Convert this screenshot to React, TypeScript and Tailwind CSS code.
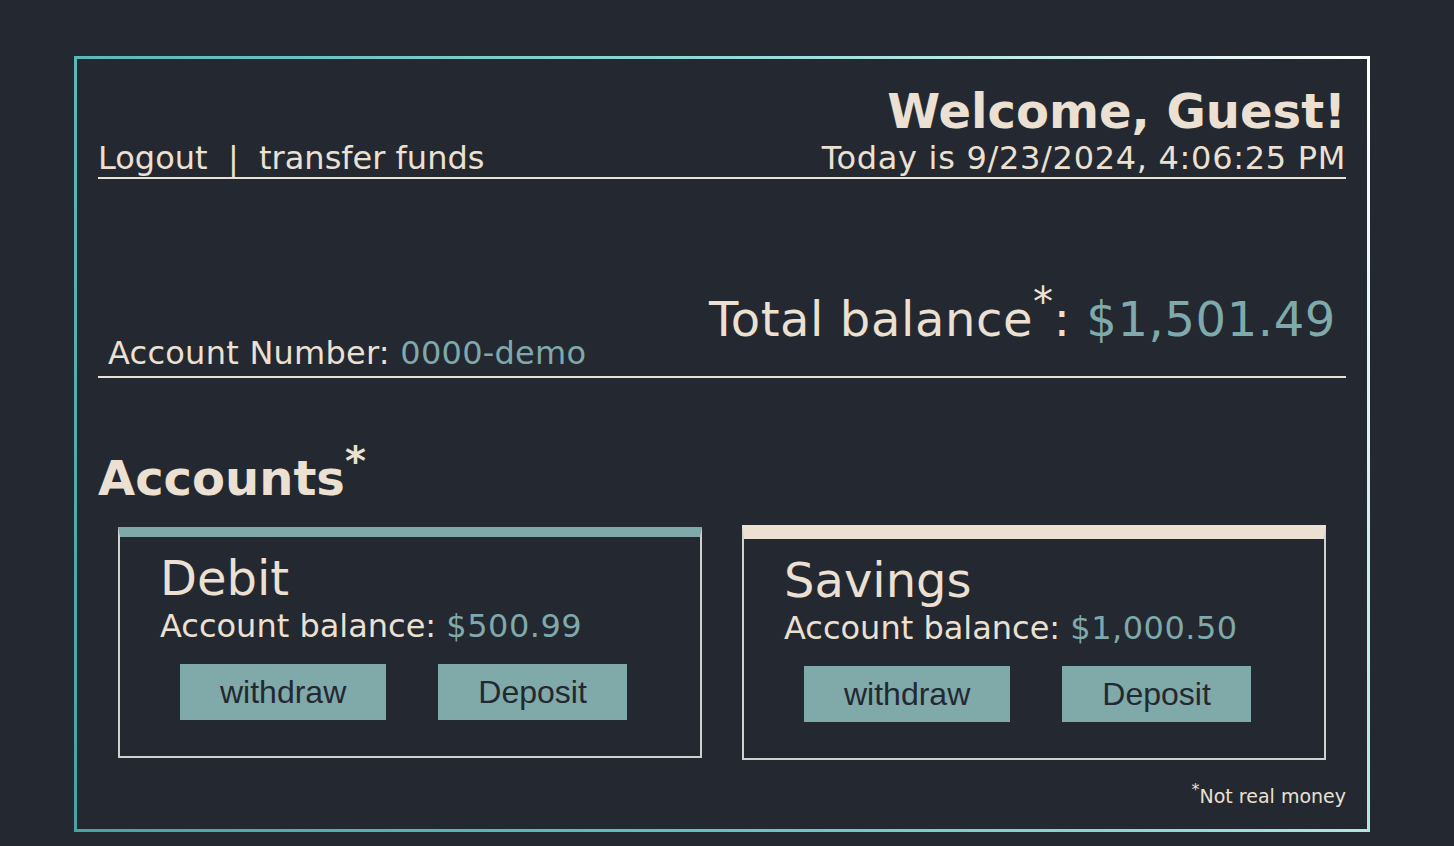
import React from 'react'

const sans = "font-['DejaVu_Sans',Verdana,sans-serif]"

const AccountCard = ({ name, balance, topClass }: { name: string; balance: string; topClass: string }) => (
    <div className={`w-[584px] border-2 border-[#d0d0d0] ${topClass} pl-[40px] pt-[17px] pb-[36px]`}>
        <h3 className="text-[48px] leading-[48px]">{name}</h3>
        <p className="mt-[8px] text-[32px] leading-[32px]">
            Account balance: <span className="text-[#7fa9ab] tracking-[0.5px]">{balance}</span>
        </p>
        <div className="mt-[22px] ml-[20px] flex gap-[52px]">
            <button className="h-[56px] px-[40px] bg-[#80a9aa] text-[#232831] text-[32px] font-['Liberation_Sans',Arial,sans-serif]">
                withdraw
            </button>
            <button className="h-[56px] px-[40px] bg-[#80a9aa] text-[#232831] text-[32px] font-['Liberation_Sans',Arial,sans-serif]">
                Deposit
            </button>
        </div>
    </div>
)

export default function App() {
    const accounts = [
        { name: 'Debit', balance: '$500.99', topClass: 'border-t-[10px] border-t-[#80a9aa]' },
        { name: 'Savings', balance: '$1,000.50', topClass: 'border-t-[14px] border-t-[#ebe0d2]' },
    ]

    return (
        <div className={`min-h-[846px] bg-[#232831] text-[#ebe0d2] ${sans} pt-[56px] pl-[74px]`}>
            <div className="w-[1296px] h-[776px] border-[3px] [border-image:linear-gradient(60deg,#48a3a3_0%,#62c0c0_35%,#95dcd8_65%,#ffffff_100%)_1] px-[21px]">
                {/* header */}
                <div className="flex justify-between items-end border-b-2 border-[#ebe0d2] pt-[28px] pb-[3px]">
                    <div className="text-[32px] leading-[32px] whitespace-pre">
                        <a>Logout</a>{'  |  '}<a>transfer funds</a>
                    </div>
                    <div className="text-right">
                        <h1 className="text-[48px] leading-[48px] font-bold">Welcome, Guest!</h1>
                        <p className="mt-[7px] text-[32px] leading-[32px] tracking-[0.7px]">Today is 9/23/2024, 4:06:25 PM</p>
                    </div>
                </div>

                {/* balance */}
                <div className="border-b-2 border-[#ebe0d2] pt-[116px] pb-[12px]">
                    <h2 className="text-right pr-[10px] text-[48px] leading-[48px] tracking-[0.6px]">
                        Total balance<sup className="text-[40px]">*</sup>: <span className="text-[#7fa9ab]">$1,501.49</span>
                    </h2>
                    <p className="pl-[10px] text-[32px] leading-[21px] tracking-[0.25px]">
                        Account Number: <span className="text-[#7fa9ab]">0000-demo</span>
                    </p>
                </div>

                {/* accounts */}
                <h2 className="mt-[76px] text-[48px] leading-[48px] font-bold">
                    Accounts<sup className="text-[40px]">*</sup>
                </h2>
                <div className="mt-[23px] px-[20px] flex items-center justify-between">
                    {accounts.map(a => <AccountCard key={a.name} {...a} />)}
                </div>
                <p className="mt-[26px] text-right text-[19px] leading-[20px]">
                    <sup className="text-[16px]">*</sup>Not real money
                </p>
            </div>
        </div>
    )
}
